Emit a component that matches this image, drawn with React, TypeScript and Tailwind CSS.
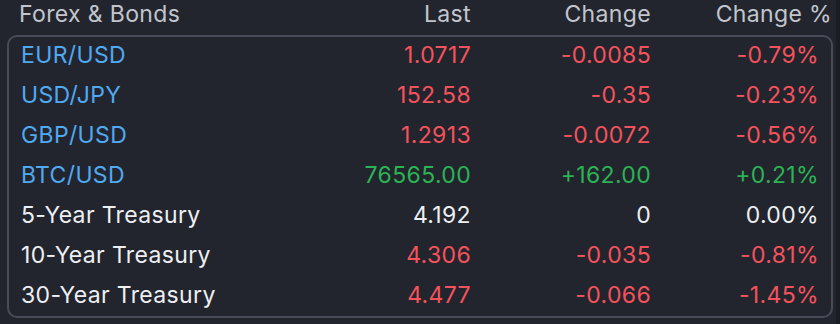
import React from 'react'

type Tone = 'up' | 'down' | 'flat'

interface Quote {
  name: string
  last: string
  change: string
  pct: string
  tone: Tone
  fx: boolean
}

const ROWS: Quote[] = [
  { name: 'EUR/USD', last: '1.0717', change: '-0.0085', pct: '-0.79%', tone: 'down', fx: true },
  { name: 'USD/JPY', last: '152.58', change: '-0.35', pct: '-0.23%', tone: 'down', fx: true },
  { name: 'GBP/USD', last: '1.2913', change: '-0.0072', pct: '-0.56%', tone: 'down', fx: true },
  { name: 'BTC/USD', last: '76565.00', change: '+162.00', pct: '+0.21%', tone: 'up', fx: true },
  { name: '5-Year Treasury', last: '4.192', change: '0', pct: '0.00%', tone: 'flat', fx: false },
  { name: '10-Year Treasury', last: '4.306', change: '-0.035', pct: '-0.81%', tone: 'down', fx: false },
  { name: '30-Year Treasury', last: '4.477', change: '-0.066', pct: '-1.45%', tone: 'down', fx: false },
]

const toneClass: Record<Tone, string> = {
  up: 'text-[#2bb354]',
  down: 'text-[#f5525c]',
  flat: 'text-[#eeeff2]',
}

export default function App() {
  return (
    <div className="flex w-[840px] h-[324px] bg-[#22252d] font-['Inter',sans-serif] text-[23px] tracking-[0.35px] leading-none">
      <div className="w-[836px]">
        {/* Header */}
        <div className="flex h-[28px] items-center pl-[19px] text-[#c3c5cd]">
          <div className="w-[272px]">Forex &amp; Bonds</div>
          <div className="w-[180px] text-right">Last</div>
          <div className="w-[180px] text-right">Change</div>
          <div className="w-[181px] text-right">Change %</div>
        </div>

        {/* Table */}
        <div className="mt-[7px] ml-[7px] w-[826px] rounded-[10px] border-2 border-[#474b57]">
          {ROWS.map((r) => (
            <div key={r.name} className="flex h-[40px] items-center pb-[3px] pl-[12px] last:h-[39px]">
              <div className={`w-[270px] ${r.fx ? 'text-[#4fa9f3]' : 'text-[#eeeff2]'}`}>{r.name}</div>
              <div className={`w-[180px] text-right ${toneClass[r.tone]}`}>{r.last}</div>
              <div className={`w-[180px] text-right ${toneClass[r.tone]}`}>{r.change}</div>
              <div className={`w-[168px] text-right ${toneClass[r.tone]}`}>{r.pct}</div>
            </div>
          ))}
        </div>
      </div>
      <div className="w-[4px] bg-[#1b1d22]" />
    </div>
  )
}
